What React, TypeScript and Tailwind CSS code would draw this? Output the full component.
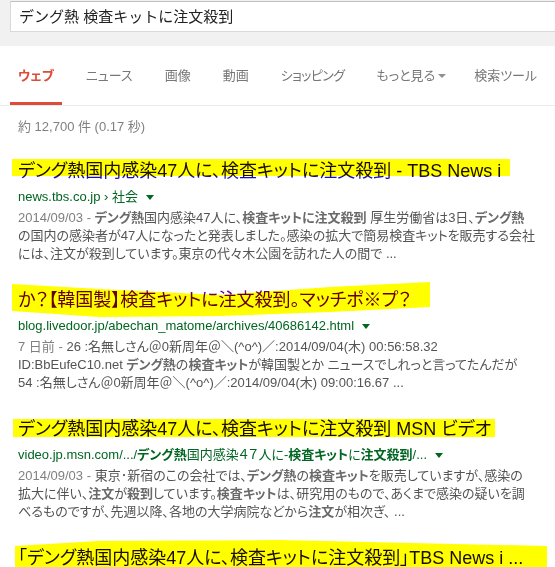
import React from 'react'

// highlighter stroke drawn over a title, multiplied so the text under it darkens
function Mark({ points }: { points: string }) {
  return (
    <svg
      className="pointer-events-none absolute left-0 top-0 overflow-visible mix-blend-multiply"
      width="1"
      height="1"
    >
      <polygon points={points} fill="#ffff00" />
    </svg>
  )
}

function Caret() {
  return (
    <span className="ml-[8px] inline-block h-0 w-0 border-x-[4px] border-t-[5px] border-x-transparent border-t-[#006621] align-middle" />
  )
}

const tabs = ['ニュース', '画像', '動画']

export default function App() {
  return (
    <div className="h-[567px] w-[555px] overflow-hidden bg-white font-['Liberation_Sans','Noto_Sans_CJK_JP',sans-serif] [font-feature-settings:'palt']">
      {/* search bar */}
      <div className="flex h-[46px] bg-[#f1f1f1] pl-[10px] pt-[1px]">
        <div className="h-[31px] w-[600px] shrink-0 border border-[#d9d9d9] border-t-[#c0c0c0] bg-white pl-[8px] text-[15px] leading-[29px] text-[#222] [font-feature-settings:normal]">
          デング熱 検査キットに注文殺到
        </div>
      </div>

      {/* tabs */}
      <div className="flex h-[60px] gap-4 whitespace-nowrap border-b border-[#ebebeb] pl-[10px] text-[13px]">
        <div className="flex h-[59px] shrink-0 items-center border-b-[3px] border-[#dd4b39] px-2 pt-[3px] font-bold text-[#dd4b39]">
          ウェブ
        </div>
        {tabs.map((t) => (
          <div key={t} className="flex h-[59px] shrink-0 items-center px-2 text-[#777]">
            {t}
          </div>
        ))}
        <div className="flex h-[59px] shrink-0 items-center px-2 tracking-[-0.6px] text-[#777]">
          ショッピング
        </div>
        <div className="flex h-[59px] shrink-0 items-center px-2 text-[#777]">
          もっと見る
          <span className="ml-[3px] inline-block h-0 w-0 border-x-[4px] border-t-[4px] border-x-transparent border-t-[#909090]" />
        </div>
        <div className="-ml-[4px] flex h-[59px] shrink-0 items-center px-2 text-[#777]">検索ツール</div>
      </div>

      <div className="pl-[18px] pt-[12px] text-[13px] leading-[18px] text-[#808080]">
        約 12,700 件 (0.17 秒)
      </div>

      <div className="px-[18px]">
        {/* result 1 */}
        <div className="mt-[24px]">
          <div className="relative h-[22px] whitespace-nowrap text-[18px] leading-[22px] text-[#1a0dab]">
            デング熱国内感染47人に、検査キットに注文殺到 - TBS News i
            <Mark points="-6,-1 492,-1 492,16 -6,16" />
          </div>
          <div className="mt-[6px] whitespace-nowrap text-[13px] leading-[18px] text-[#006621]">
            news.tbs.co.jp › 社会
            <Caret />
          </div>
          <div className="mt-[3px] text-[13px] leading-[18px] text-[#545454]">
            <div className="whitespace-nowrap">
              <span className="text-[#808080]">2014/09/03 - </span>
              <b className="font-bold text-[#6a6a6a]">デング熱</b>国内感染47人に、
              <b className="font-bold text-[#6a6a6a]">検査キットに注文殺到</b> 厚生労働省は3日、
              <b className="font-bold text-[#6a6a6a]">デング熱</b>
            </div>
            <div className="whitespace-nowrap">
              の国内の感染者が47人になったと発表しました。感染の拡大で簡易検査キットを販売する会社
            </div>
            <div className="whitespace-nowrap">
              には、注文が殺到しています。東京の代々木公園を訪れた人の間で ...
            </div>
          </div>
        </div>

        {/* result 2 */}
        <div className="mt-[26px]">
          <div className="relative h-[22px] whitespace-nowrap text-[18px] leading-[22px] text-[#660099]">
            か？【韓国製】検査キットに注文殺到。マッチポ※プ？
            <Mark points="-6,-5 82,0 202,6 312,-2 412,-7 412,18 312,23 202,27 82,28 -6,22" />
          </div>
          <div className="mt-[6px] whitespace-nowrap text-[13px] leading-[18px] text-[#006621]">
            blog.livedoor.jp/abechan_matome/archives/40686142.html
            <Caret />
          </div>
          <div className="mt-[3px] text-[13px] leading-[18px] text-[#545454]">
            <div className="whitespace-nowrap">
              <span className="text-[#808080]">7 日前 - </span>
              26 :名無しさん＠0新周年＠＼(^o^)／:2014/09/04(木) 00:56:58.32
            </div>
            <div className="whitespace-nowrap">
              ID:BbEufeC10.net <b className="font-bold text-[#6a6a6a]">デング熱</b>の
              <b className="font-bold text-[#6a6a6a]">検査キット</b>が韓国製とか ニュースでしれっと言ってたんだが
            </div>
            <div className="whitespace-nowrap">
              54 :名無しさん＠0新周年＠＼(^o^)／:2014/09/04(木) 09:00:16.67 ...
            </div>
          </div>
        </div>

        {/* result 3 */}
        <div className="mt-[26px]">
          <div className="relative h-[22px] whitespace-nowrap text-[18px] leading-[22px] text-[#1a0dab]">
            デング熱国内感染47人に、検査キットに注文殺到 MSN ビデオ
            <Mark points="-5,1 477,1 477,19 -5,19" />
          </div>
          <div className="mt-[6px] whitespace-nowrap text-[13px] leading-[18px] text-[#006621]">
            video.jp.msn.com/.../<b className="font-bold">デング熱</b>国内感染４７人に-
            <b className="font-bold">検査キット</b>に<b className="font-bold">注文殺到</b>/...
            <Caret />
          </div>
          <div className="mt-[3px] text-[13px] leading-[18px] text-[#545454]">
            <div className="whitespace-nowrap">
              <span className="text-[#808080]">2014/09/03 - </span>
              東京･新宿のこの会社では、<b className="font-bold text-[#6a6a6a]">デング熱</b>の
              <b className="font-bold text-[#6a6a6a]">検査キット</b>を販売していますが、感染の
            </div>
            <div className="whitespace-nowrap">
              拡大に伴い、<b className="font-bold text-[#6a6a6a]">注文</b>が
              <b className="font-bold text-[#6a6a6a]">殺到</b>しています。
              <b className="font-bold text-[#6a6a6a]">検査キット</b>は、研究用のもので、あくまで感染の疑いを調
            </div>
            <div className="whitespace-nowrap">
              べるものですが、先週以降、各地の大学病院などから
              <b className="font-bold text-[#6a6a6a]">注文</b>が相次ぎ、 ...
            </div>
          </div>
        </div>

        {/* result 4 */}
        <div className="mt-[26px]">
          <div className="relative h-[22px] whitespace-nowrap text-[18px] leading-[22px] text-[#1a0dab]">
            「デング熱国内感染47人に、検査キットに注文殺到」TBS News i ...
            <Mark points="-3,-1 80,-6 262,-7 529,-1 529,20 -3,20" />
          </div>
        </div>
      </div>
    </div>
  )
}
